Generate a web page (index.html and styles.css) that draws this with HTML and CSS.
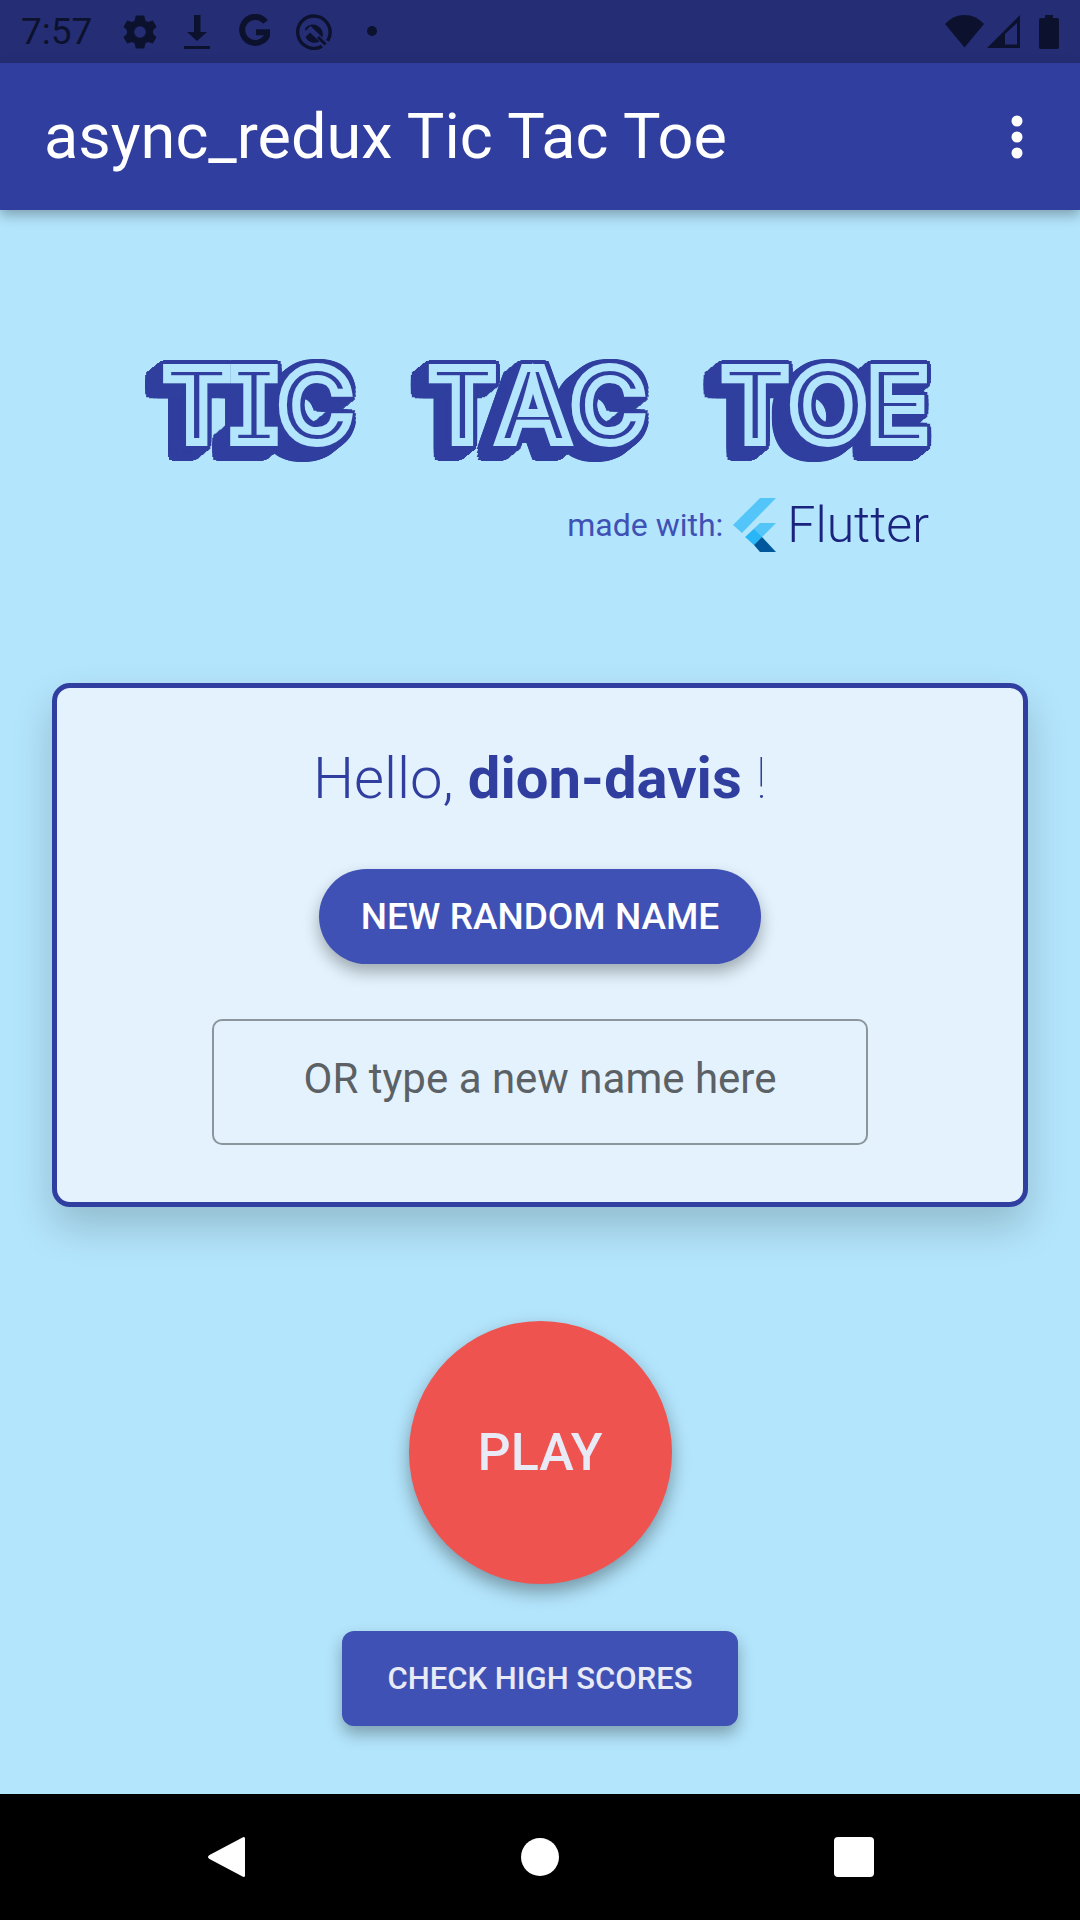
FILE: index.html
```html
<!DOCTYPE html>
<html lang="en">
<head>
<meta charset="utf-8">
<meta name="viewport" content="width=device-width, initial-scale=1">
<title>async_redux Tic Tac Toe</title>
<link rel="stylesheet" href="styles.css">
</head>
<body>
<div class="screen">
  <div class="status-bar">
    <span class="clock">7:57</span>
    <div class="notifications">
      <svg width="36" height="36" viewBox="0 0 36 36" aria-hidden="true"><path fill-rule="evenodd" d="M13.700 1.500h8.600l1 5.100 2.600 1.500 4.900-1.700 3.700 6.400-3.400 3.500v3.400l3.400 3.500-3.700 6.400-4.900-1.700-2.600 1.500-1 5.100h-8.600l-1-5.100-2.600-1.500-4.900 1.700-3.700-6.400 3.400-3.500v-3.400l-3.400-3.500 3.700-6.400 4.900 1.700 2.600-1.500zM18 12.200a5.800 5.800 0 1 0 0 11.600 5.800 5.800 0 0 0 0-11.600z"/></svg>
      <svg width="26" height="36" viewBox="0 0 26 36" aria-hidden="true"><path d="M10 1h6.500v17H23L13 27 3 18h7zM0 32h26v3H0z"/></svg>
      <svg width="34" height="36" viewBox="-4 0 34 36" aria-hidden="true"><path fill="none" stroke="currentColor" stroke-width="6" d="M25.500 8A13 13 0 1 0 28 18.200H16"/></svg>
      <svg width="36" height="36" viewBox="0 0 36 36" aria-hidden="true"><path fill="none" stroke="currentColor" stroke-width="3.400" d="M26 32.200A16.200 16.200 0 1 1 31.600 26.800"/><path d="M9 14.500A10 10 0 0 1 26.500 23.500L14.500 12 9.500 17z"/><path d="M9.500 23l4.500-4.500 9.500 9a10 10 0 0 1-14-4.500z"/><path fill="none" stroke="currentColor" stroke-width="3" d="M22 23l7.500 7.500"/></svg>
      <svg class="more-dot" width="10" height="36" viewBox="0 0 10 36" aria-hidden="true"><circle cx="5" cy="17" r="5"/></svg>
    </div>
    <div class="system">
      <svg width="76" height="36" viewBox="0 0 76 36" aria-hidden="true"><path d="M0 10Q8 1 19.500 1T39 10L19.500 33.500z"/><path fill-rule="evenodd" d="M75 1v33H42zM72 9L60 20v10.500h12z"/></svg>
      <svg width="20" height="36" viewBox="0 0 20 36" aria-hidden="true"><path d="M6 1h8v3h4a2 2 0 0 1 2 2v27a2 2 0 0 1-2 2H2a2 2 0 0 1-2-2V6a2 2 0 0 1 2-2h4z"/></svg>
    </div>
  </div>

  <header class="app-bar">
    <h1 class="app-title">async_redux Tic Tac Toe</h1>
    <button class="menu" type="button" aria-label="More options">
      <svg width="12" height="44" viewBox="0 0 12 44" aria-hidden="true"><circle cx="6" cy="6" r="5.500"/><circle cx="6" cy="22" r="5.500"/><circle cx="6" cy="38" r="5.500"/></svg>
    </button>
  </header>

  <main class="content">
    <section class="brand">
      <h2 class="logo"><span class="word" data-word="TIC">TIC</span> <span class="word" data-word="TAC">TAC</span> <span class="word" data-word="TOE">TOE</span></h2>
      <p class="made-with">
        <span>made with:</span>
        <svg width="44" height="54" viewBox="0 0 44 54" aria-hidden="true"><path fill="#54c5f8" d="M27 0h16L9 35 0 27zM27 25h16L21 47l-9-8z"/><path fill="#29b6f6" d="M21 31l8 8-8 8-8.500-8z"/><path fill="#01579b" d="M21 47l8-8 14 15H27z"/></svg>
        <span class="flutter">Flutter</span>
      </p>
    </section>

    <form class="card">
      <p class="greeting">Hello, <strong>dion-davis</strong> <span class="bang">!</span></p>
      <button class="button button-round" type="button">NEW RANDOM NAME</button>
      <input class="name-input" type="text" aria-label="New name" placeholder="OR type a new name here">
    </form>

    <div class="actions">
      <button class="play" type="button">PLAY</button>
      <button class="button button-scores" type="button">CHECK HIGH SCORES</button>
    </div>
  </main>

  <nav class="nav-bar" aria-label="System">
    <button class="nav-button" type="button" aria-label="Back"><svg width="42" height="44" viewBox="0 0 42 44" aria-hidden="true"><path d="M38 2.200q2-1 2 1.500v36.600q0 2.500-2 1.500L4.500 24q-3-2 0-4z"/></svg></button>
    <button class="nav-button" type="button" aria-label="Home"><svg width="42" height="44" viewBox="0 0 42 44" aria-hidden="true"><circle cx="21" cy="22" r="19"/></svg></button>
    <button class="nav-button" type="button" aria-label="Overview"><svg width="42" height="44" viewBox="0 0 42 44" aria-hidden="true"><rect x="1" y="2" width="40" height="40" rx="4"/></svg></button>
  </nav>
</div>
</body>
</html>
```
FILE: styles.css
```css
* {
  box-sizing: border-box;
}

body,
h1,
h2,
p {
  margin: 0;
}

body {
  font-family: Roboto, "Liberation Sans", sans-serif;
  background: #b3e5fc;
}

button {
  border: 0;
  padding: 0;
  font: inherit;
  color: inherit;
  background: none;
  cursor: pointer;
}

svg {
  display: block;
  flex: none;
  fill: currentColor;
}

.screen {
  display: flex;
  flex-direction: column;
  min-height: 100vh;
}

/* System status bar */
.status-bar {
  display: flex;
  align-items: center;
  gap: 30px;
  height: 63px;
  padding: 0 21px;
  color: #0c122e;
  background: #252e75;
}

.clock {
  font-size: 37px;
}

.notifications {
  display: flex;
  gap: 26px;
}

.more-dot {
  margin-left: 9px;
}

.system {
  display: flex;
  gap: 18px;
  margin-left: auto;
}

/* App bar */
.app-bar {
  display: flex;
  align-items: center;
  justify-content: space-between;
  height: 147px;
  padding: 0 42px 0 44px;
  color: #fff;
  background: #303f9f;
  box-shadow: 0 5px 12px rgba(0, 0, 0, 0.3);
}

.app-title {
  font-size: 63px;
  font-weight: 400;
}

.menu {
  display: flex;
  justify-content: center;
  width: 42px;
}

/* Content */
.content {
  flex: 1;
  display: flex;
  flex-direction: column;
  align-items: center;
  padding: 142px 52px 64px;
}

.brand {
  display: flex;
  flex-direction: column;
  gap: 39px;
  width: 100%;
  max-width: 778px;
}

.logo {
  display: flex;
  justify-content: space-between;
  padding-left: 12px;
  font: 600 102px/106px Inter, sans-serif;
  font-feature-settings: "cv08";
  font-kerning: none;
  color: #303f9f;
}

.word {
  position: relative;
  isolation: isolate;
  -webkit-text-stroke: 8px #b3e5fc;
}

/* Outline, then the extruded side of the lettering */
.word::before {
  content: attr(data-word);
  position: absolute;
  inset: 0;
  z-index: -1;
  -webkit-text-stroke: 8px #303f9f;
  text-shadow:
    8px 0, 8px -4px, 7px -7px, 4px -8px, 0 -8px, -4px -8px, -7px -7px, -8px -4px,
    -8px 0, -8px 4px, -7px 7px, -4px 8px, 0 8px, 4px 8px, 7px 7px, 8px 4px,
    6px 8px, 5px 9px, 4px 9px, 3px 10px, 2px 11px, 1px 12px, 0 13px,
    -1px 13px, -2px 14px, -3px 15px, -4px 16px, -5px 17px, -6px 17px, -7px 18px,
    -8px -6px, -9px -5px, -10px -5px, -11px -4px, -12px -3px, -13px -2px, -14px -1px,
    -15px -1px, -16px 0, -17px 1px, -18px 2px, -19px 3px, -20px 3px, -21px 4px,
    -4px 3px, -8px 6px, -11px 9px, -14px 11px,
    -11px 10px, -15px 13px, -18px 16px, -21px 18px,
    -22px 7px, -22px 11px, -22px 15px, -18px 19px, -14px 19px, -10px 19px;
}

.made-with {
  display: flex;
  align-items: center;
  justify-content: flex-end;
  gap: 10px;
  font-size: 32px;
  color: #3f51b5;
}

.flutter {
  font-size: 50px;
  line-height: 56px;
  font-weight: 300;
  color: #1a237e;
}

/* Name card */
.card {
  display: flex;
  flex-direction: column;
  align-items: center;
  align-self: stretch;
  margin-top: 130px;
  padding: 56px 48px 57px;
  border: 5px solid #303f9f;
  border-radius: 18px;
  background: #e3f2fd;
  box-shadow: 0 20px 40px rgba(0, 0, 0, 0.18);
}

.greeting {
  font-size: 58px;
  line-height: 68px;
  font-weight: 300;
  color: #303f9f;
}

.greeting strong {
  font-weight: 700;
}

.bang {
  font-weight: 100;
}

.button {
  height: 95px;
  padding: 0 42px;
  font-weight: 500;
  background: #3f51b5;
  box-shadow: 0 8px 16px rgba(0, 0, 0, 0.3);
}

.button-round {
  margin-top: 57px;
  border-radius: 48px;
  font-size: 37px;
  color: #fff;
}

.name-input {
  width: 100%;
  max-width: 656px;
  height: 126px;
  margin-top: 55px;
  padding: 0 32px 8px;
  border: 2px solid #8a959c;
  border-radius: 10px;
  font: inherit;
  font-size: 42px;
  text-align: center;
  color: #303f9f;
  background: transparent;
}

.name-input::placeholder {
  color: #5b6165;
  opacity: 1;
}

/* Actions */
.actions {
  display: flex;
  flex-direction: column;
  align-items: center;
  gap: 47px;
  margin-top: 114px;
  color: #e8eaf6;
}

.play {
  width: 263px;
  height: 263px;
  border-radius: 50%;
  font-size: 52px;
  font-weight: 500;
  background: #ef5350;
  box-shadow: 0 8px 18px rgba(0, 0, 0, 0.35);
}

.button-scores {
  min-width: 396px;
  border-radius: 12px;
  font-size: 31px;
}

/* System navigation */
.nav-bar {
  display: flex;
  align-items: center;
  justify-content: space-between;
  height: 126px;
  padding: 0 199px;
  color: #fff;
  background: #000;
}

.nav-button {
  display: flex;
  justify-content: center;
  width: 54px;
}
```
